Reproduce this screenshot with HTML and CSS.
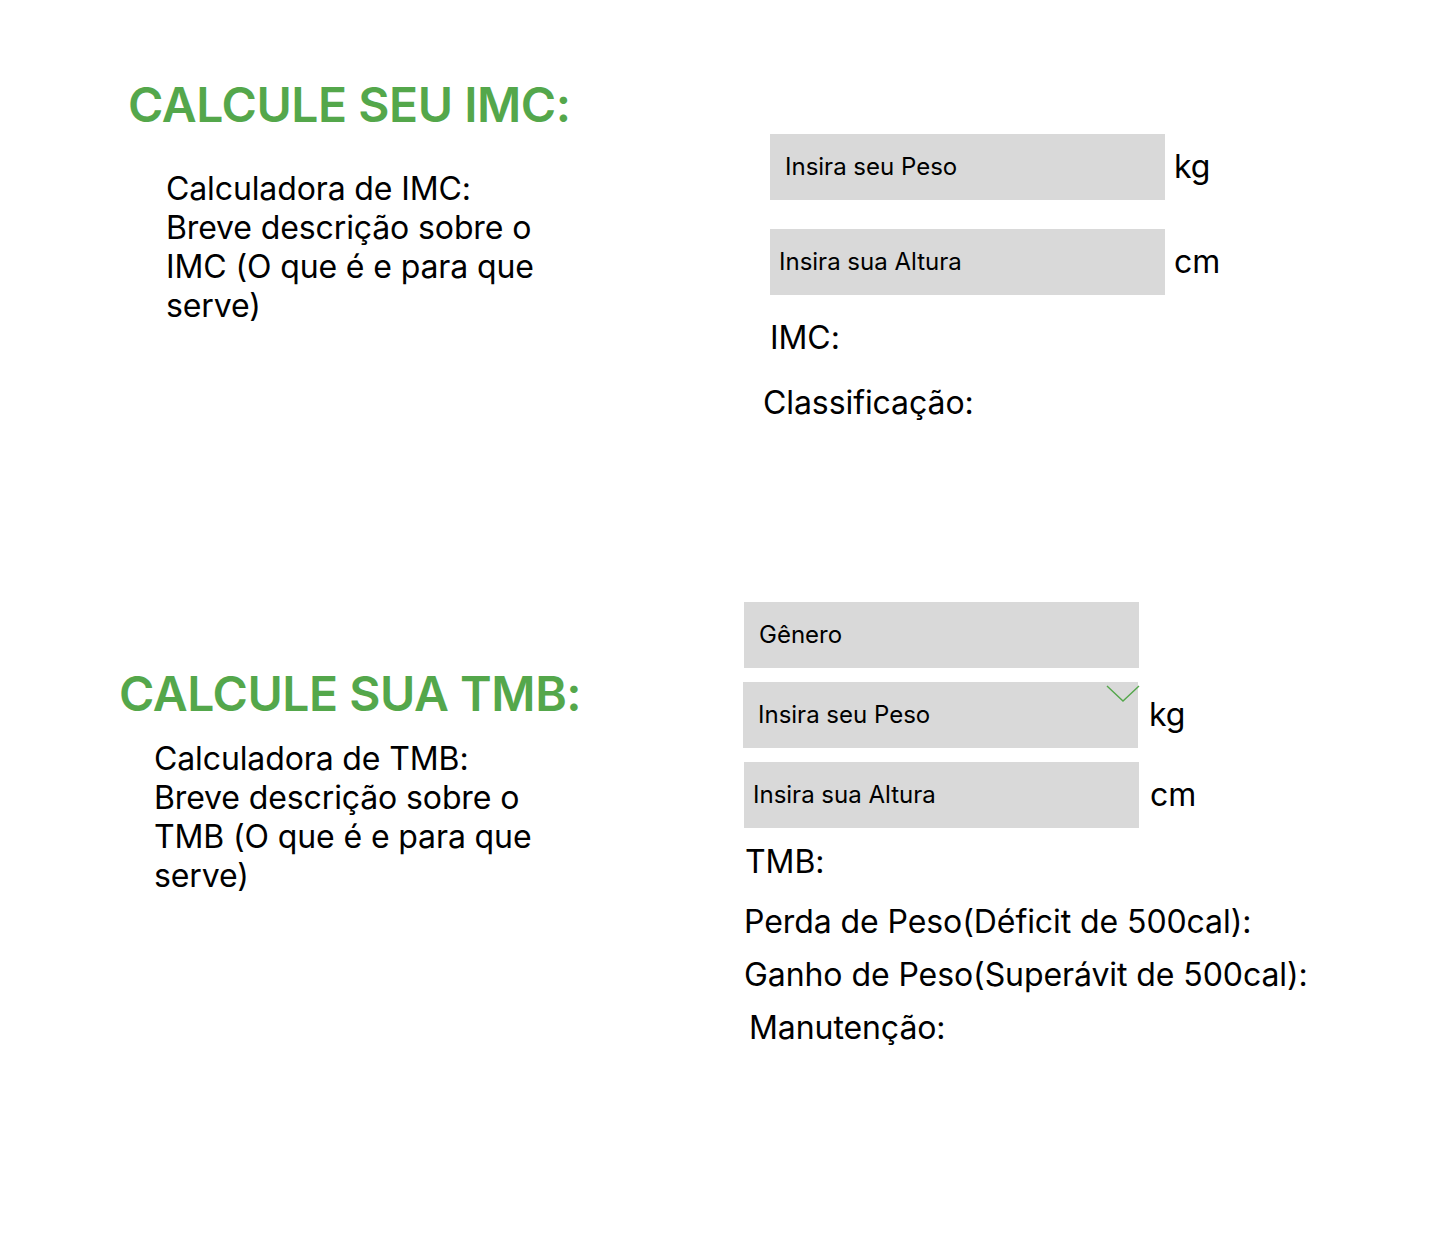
FILE: index.html
```html
<!DOCTYPE html>
<html lang="pt-BR">
<head>
<meta charset="utf-8">
<title>Calculadoras IMC e TMB</title>
<link rel="stylesheet" href="styles.css">
</head>
<body>
<main class="page">
  <section class="calc calc-imc">
    <div class="calc-info">
      <h2 class="calc-title">CALCULE SEU IMC:</h2>
      <p class="calc-desc">Calculadora de IMC:<br>Breve descrição sobre o<br>IMC (O que é e para que<br>serve)</p>
    </div>
    <div class="calc-form">
      <div class="field-row">
        <div class="field"><input class="field-input" type="text" placeholder="Insira seu Peso"></div>
        <span class="unit">kg</span>
      </div>
      <div class="field-row field-row-spaced">
        <div class="field"><input class="field-input field-input-tight" type="text" placeholder="Insira sua Altura"></div>
        <span class="unit">cm</span>
      </div>
      <p class="result result-imc">IMC:</p>
      <p class="result result-class">Classificação:</p>
    </div>
  </section>

  <section class="calc calc-tmb">
    <div class="calc-info">
      <h2 class="calc-title">CALCULE SUA TMB:</h2>
      <p class="calc-desc">Calculadora de TMB:<br>Breve descrição sobre o<br>TMB (O que é e para que<br>serve)</p>
    </div>
    <div class="calc-form">
      <div class="field-row">
        <div class="field"><input class="field-input" type="text" placeholder="Gênero"></div>
      </div>
      <div class="field-row field-row-tmb field-row-shift">
        <div class="field">
          <input class="field-input" type="text" placeholder="Insira seu Peso">
          <svg class="chevron" width="34" height="18" viewBox="0 0 34 18" aria-hidden="true"><polyline points="1,1 17,16 33,1" fill="none" stroke="#54a74b" stroke-width="1.4"/></svg>
        </div>
        <span class="unit">kg</span>
      </div>
      <div class="field-row field-row-tmb">
        <div class="field"><input class="field-input field-input-tight" type="text" placeholder="Insira sua Altura"></div>
        <span class="unit">cm</span>
      </div>
      <p class="result result-tmb">TMB:</p>
      <p class="result result-perda">Perda de Peso(Déficit de 500cal):</p>
      <p class="result result-ganho">Ganho de Peso(Superávit de 500cal):</p>
      <p class="result result-manut">Manutenção:</p>
    </div>
  </section>
</main>
</body>
</html>
```

FILE: styles.css
```css
* { box-sizing: border-box; }

html, body {
  margin: 0;
  padding: 0;
  background: #ffffff;
}

body {
  font-family: Inter, "Noto Sans", "Liberation Sans", sans-serif;
  color: #000000;
  width: 1440px;
  min-height: 1244px;
}

.page {
  padding-top: 76px;
}

.calc {
  display: flex;
  align-items: flex-start;
}

.calc-title {
  margin: 0;
  font-size: 48px;
  line-height: 58px;
  font-weight: 600;
  color: #54a74b;
  letter-spacing: -0.45px;
  white-space: nowrap;
}

.calc-desc {
  margin: 0;
  font-size: 32px;
  line-height: 39px;
  font-weight: 400;
  letter-spacing: -0.12px;
  white-space: nowrap;
}

/* IMC section */
.calc-imc .calc-info {
  width: 770px;
  padding-left: 128px;
}

.calc-imc .calc-desc {
  margin-top: 35px;
  padding-left: 38px;
}

.calc-imc .calc-form {
  margin-top: 58px;
}

/* TMB section */
.calc-tmb {
  margin-top: 179px;
}

.calc-tmb .calc-info {
  width: 744px;
  padding-left: 119px;
  padding-top: 63px;
}

.calc-tmb .calc-desc {
  margin-top: 16px;
  padding-left: 35px;
}

/* fields */
.field-row {
  display: flex;
  align-items: center;
  gap: 9px;
}

.field-row-spaced {
  margin-top: 29px;
}

.field-row-tmb {
  margin-top: 14px;
  gap: 11px;
}

.field-row-shift {
  margin-left: -1px;
}

.field {
  position: relative;
  width: 395px;
  height: 66px;
}

.field-input {
  display: block;
  width: 100%;
  height: 100%;
  border: 0;
  outline: 0;
  margin: 0;
  background: #d9d9d9;
  padding: 0 0 2px 15px;
  font-family: Inter, "Noto Sans", "Liberation Sans", sans-serif;
  font-size: 24px;
  color: #000000;
}

.field-input-tight {
  padding-left: 9px;
}

.field-input::placeholder {
  color: #000000;
  opacity: 1;
}

.chevron {
  position: absolute;
  left: 363px;
  top: 3px;
}

.unit {
  font-size: 32px;
  line-height: 40px;
}

/* results */
.result {
  margin: 0;
  font-size: 32px;
  line-height: 40px;
  letter-spacing: -0.08px;
  white-space: nowrap;
}

.result-imc {
  margin-top: 23px;
}

.result-class {
  margin-top: 25px;
  margin-left: -7px;
}

.result-tmb {
  margin-top: 14px;
  margin-left: 1px;
}

.result-perda {
  margin-top: 20px;
}

.result-ganho {
  margin-top: 13px;
}

.result-manut {
  margin-top: 13px;
  margin-left: 5px;
}
```
